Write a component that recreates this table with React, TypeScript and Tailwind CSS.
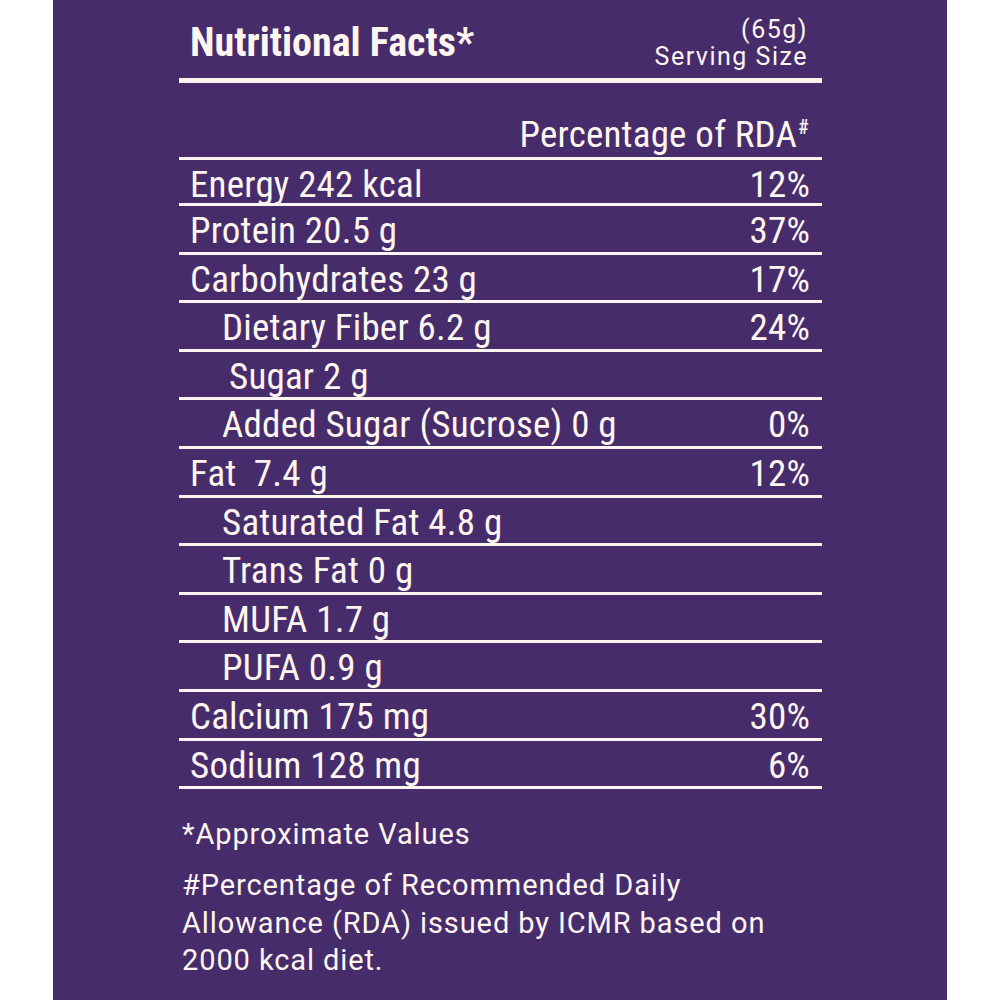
const rows = [
  { label: "Energy 242 kcal", value: "12%", indent: "pl-[11px]" },
  { label: "Protein 20.5 g", value: "37%", indent: "pl-[11px]" },
  { label: "Carbohydrates 23 g", value: "17%", indent: "pl-[11px]" },
  { label: "Dietary Fiber 6.2 g", value: "24%", indent: "pl-[43px]" },
  { label: "Sugar 2 g", value: "", indent: "pl-[50px]" },
  { label: "Added Sugar (Sucrose) 0 g", value: "0%", indent: "pl-[43px]" },
  { label: "Fat  7.4 g", value: "12%", indent: "pl-[11px]" },
  { label: "Saturated Fat 4.8 g", value: "", indent: "pl-[43px]" },
  { label: "Trans Fat 0 g", value: "", indent: "pl-[43px]" },
  { label: "MUFA 1.7 g", value: "", indent: "pl-[43px]" },
  { label: "PUFA 0.9 g", value: "", indent: "pl-[43px]" },
  { label: "Calcium 175 mg", value: "30%", indent: "pl-[11px]" },
  { label: "Sodium 128 mg", value: "6%", indent: "pl-[11px]" },
];

const condensed = "font-['Roboto_Condensed',Roboto,sans-serif]";

export default function App() {
  return (
    <div className="flex h-[1000px] w-full justify-center bg-white">
      <div className="h-full w-[894px] bg-[#472c6b] text-[#fdf5ef]">
        <div className="ml-[126px] w-[643px]">
          {/* title + serving size */}
          <div className="flex h-[78px] items-start justify-between">
            <h1 className={`${condensed} pl-[11px] pt-[23px] text-[40px] font-bold leading-[40px] whitespace-pre`}>
              Nutritional Facts*
            </h1>
            <div className="pr-[14px] pt-[16px] text-right font-['Roboto',sans-serif] text-[25px] leading-[27px] tracking-[1.5px]">
              <div>(65g)</div>
              <div>Serving Size</div>
            </div>
          </div>
          <div className="h-[5px] bg-[#fdf5ef]" />

          {/* column header */}
          <div className={`${condensed} h-[77px] border-b-[3px] border-[#fdf5ef] pr-[13px] pt-[29px] text-right text-[37px] leading-[45.4px] tracking-[0.2px]`}>
            Percentage of RDA
            <span className="relative -top-[13px] ml-[1px] text-[20px] font-medium">#</span>
          </div>

          {/* nutrient rows */}
          {rows.map((r, i) => (
            <div
              key={r.label}
              className={`${condensed} flex justify-between border-b-[3px] border-[#fdf5ef] pt-[2px] text-[37px] leading-[45.4px] tracking-[0.2px] ${i === 0 ? "h-[46px]" : "h-[48.6px]"} ${r.indent} pr-[12px]`}
            >
              <span className="whitespace-pre">{r.label}</span>
              <span>{r.value}</span>
            </div>
          ))}

          {/* footnotes */}
          <div className="pl-[3px] pt-[26px] font-['Roboto',sans-serif] text-[29px] leading-[38px] tracking-[0.9px]">
            <p>*Approximate Values</p>
            <p className="mt-[14px] leading-[37.5px]">
              #Percentage of Recommended Daily
              <br />
              Allowance (RDA) issued by ICMR based on
              <br />
              2000 kcal diet.
            </p>
          </div>
        </div>
      </div>
    </div>
  );
}
